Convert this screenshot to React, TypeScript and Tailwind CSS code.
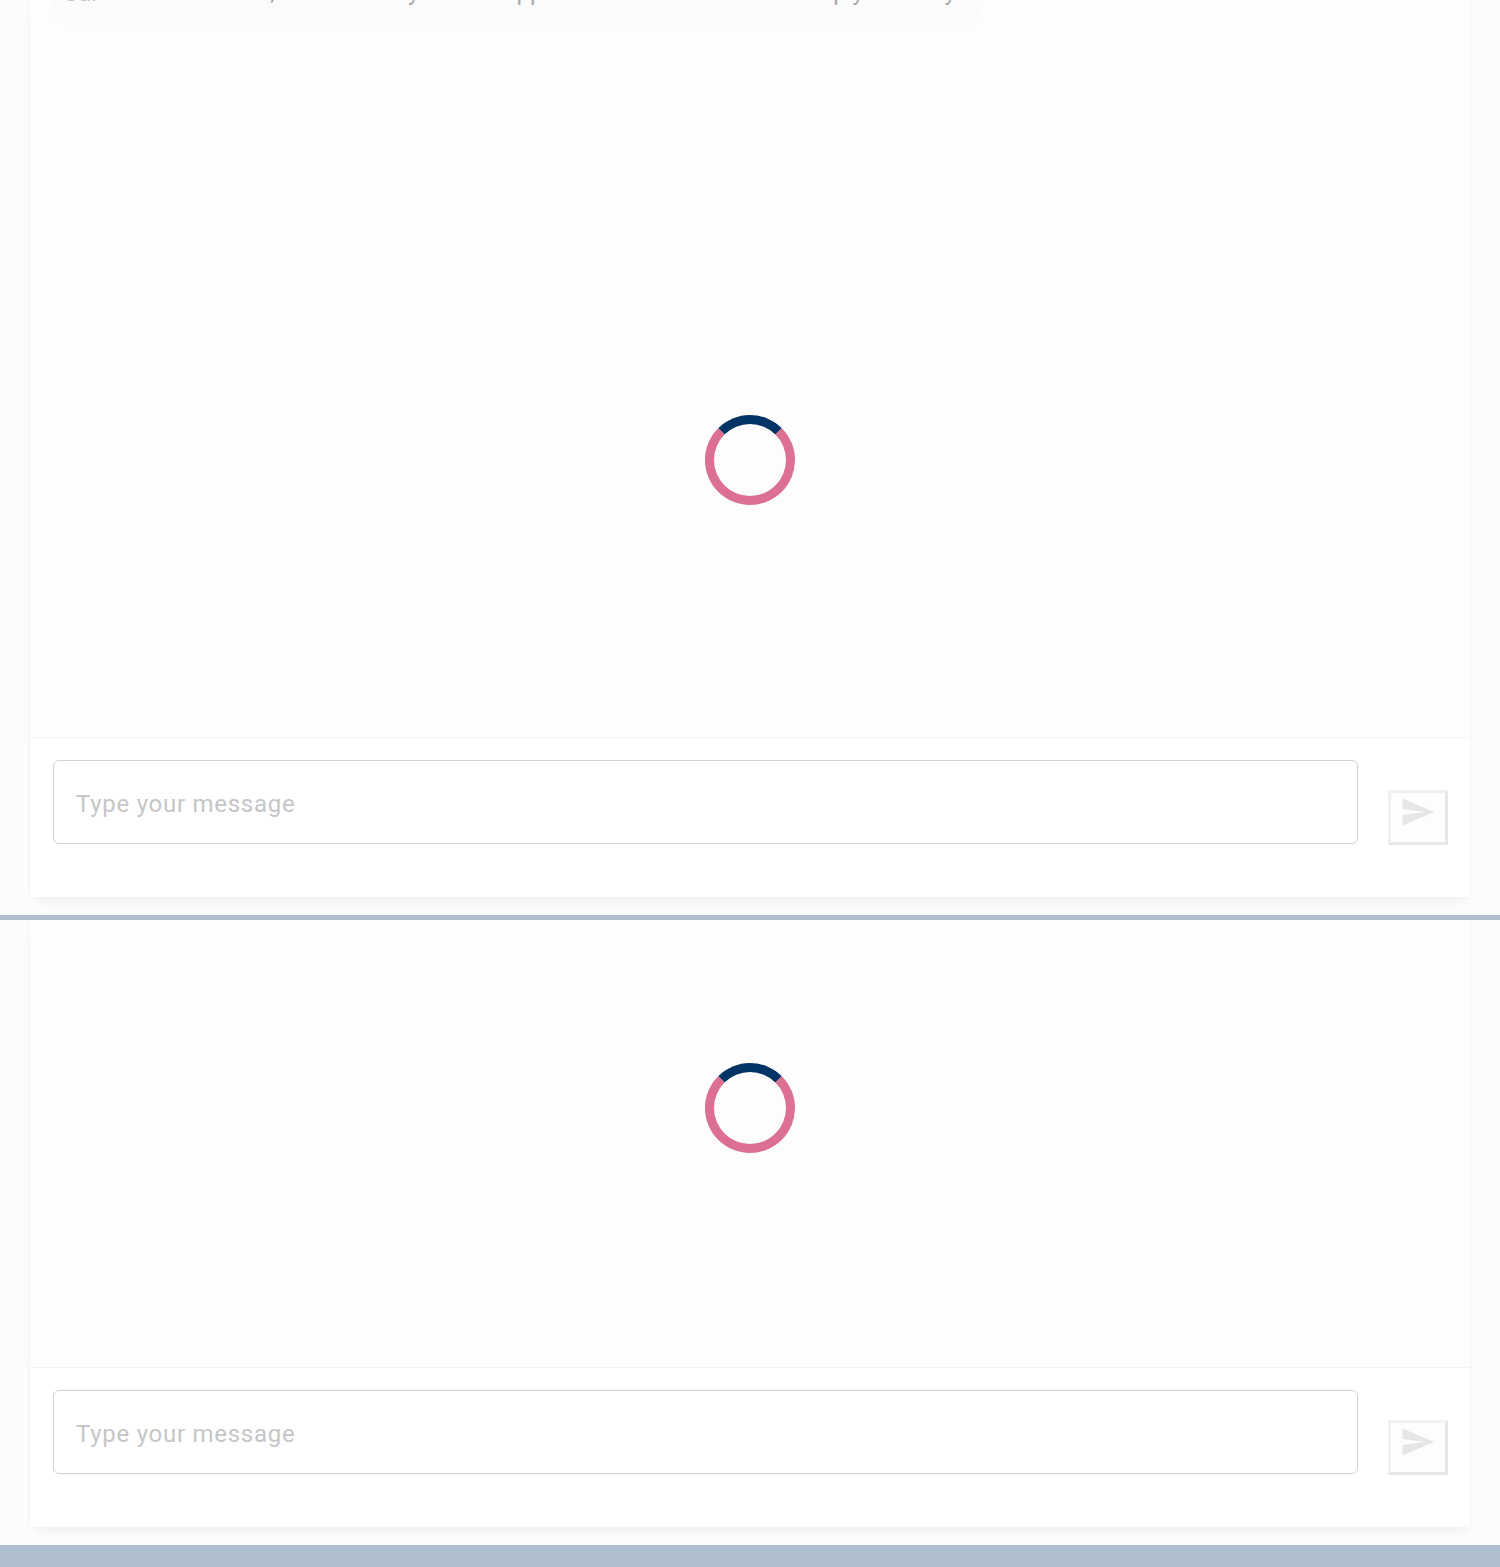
import React from "react";

function Spinner() {
  return (
    <div className="size-[90px] rounded-full border-[9px] border-[#db7093] border-t-[#003366]" />
  );
}

function Composer() {
  return (
    <div className="flex h-[160px] items-start border-t border-[#f3f3f3] bg-white pt-[22px] pr-[22px] pl-[23px]">
      <div className="h-[84px] flex-1 rounded-[6px] border border-[#d1d1d1] pt-[25px] pl-[22px] text-[24px] leading-[36px] tracking-[0.73px] text-[#c5c6c8]">
        Type your message
      </div>
      <button className="mt-[30px] ml-[30px] flex h-[55px] w-[60px] items-start border-[3px] border-t-[#f0f0f0] border-r-[#e7e7e7] border-b-[#e7e7e7] border-l-[#f0f0f0] bg-[#fdfdfd] pt-px pl-[9px]">
        <svg viewBox="0 0 24 24" className="size-[36px] shrink-0 fill-[#e6e6e6]">
          <path d="M1.7 21L22.9 12 1.7 3 1.7 10l15 2-15 2z" />
        </svg>
      </button>
    </div>
  );
}

function Card({ children }: { children: React.ReactNode }) {
  return (
    <div className="mx-[30px] mb-[18px] flex flex-1 flex-col bg-[#fdfdfd] shadow-[0_0_7px_rgba(0,0,0,0.035),0_10px_12px_-6px_rgba(0,0,0,0.045)]">
      {children}
      <Composer />
    </div>
  );
}

export default function App() {
  return (
    <div className="flex h-[1567px] w-[1500px] flex-col bg-[#b0bfd0] font-[Roboto,sans-serif]">
      <section className="flex h-[915px] flex-col overflow-hidden bg-[#fafcfe]">
        <Card>
          <div className="h-[25px] overflow-hidden pl-[23px]">
            <div className="-mt-[30px] flex h-[55px] w-[929px] rounded-[18px] bg-[#fbfbfb] pt-[4px] pl-[12px] text-[24px] leading-[36px] whitespace-nowrap text-[#aaaaaa]">
              <span className="w-[55px] pt-px text-[#c4c4c4]">Jar</span>
              <span className="w-[155px] text-right">is not online,</span>
              <span className="w-[133px] pl-[8px]">we can lend</span>
              <span className="w-[83px]">you the</span>
              <span className="w-[321.5px]">support team that will send</span>
              <span className="w-[61.5px]">reply</span>
              <span>in a day</span>
            </div>
          </div>
          <div className="flex flex-1 justify-center pt-[390px]">
            <Spinner />
          </div>
        </Card>
      </section>
      <section className="mt-[5px] flex h-[625px] flex-col overflow-hidden bg-[#fafcfe]">
        <Card>
          <div className="flex flex-1 justify-center pt-[143px]">
            <Spinner />
          </div>
        </Card>
      </section>
    </div>
  );
}
